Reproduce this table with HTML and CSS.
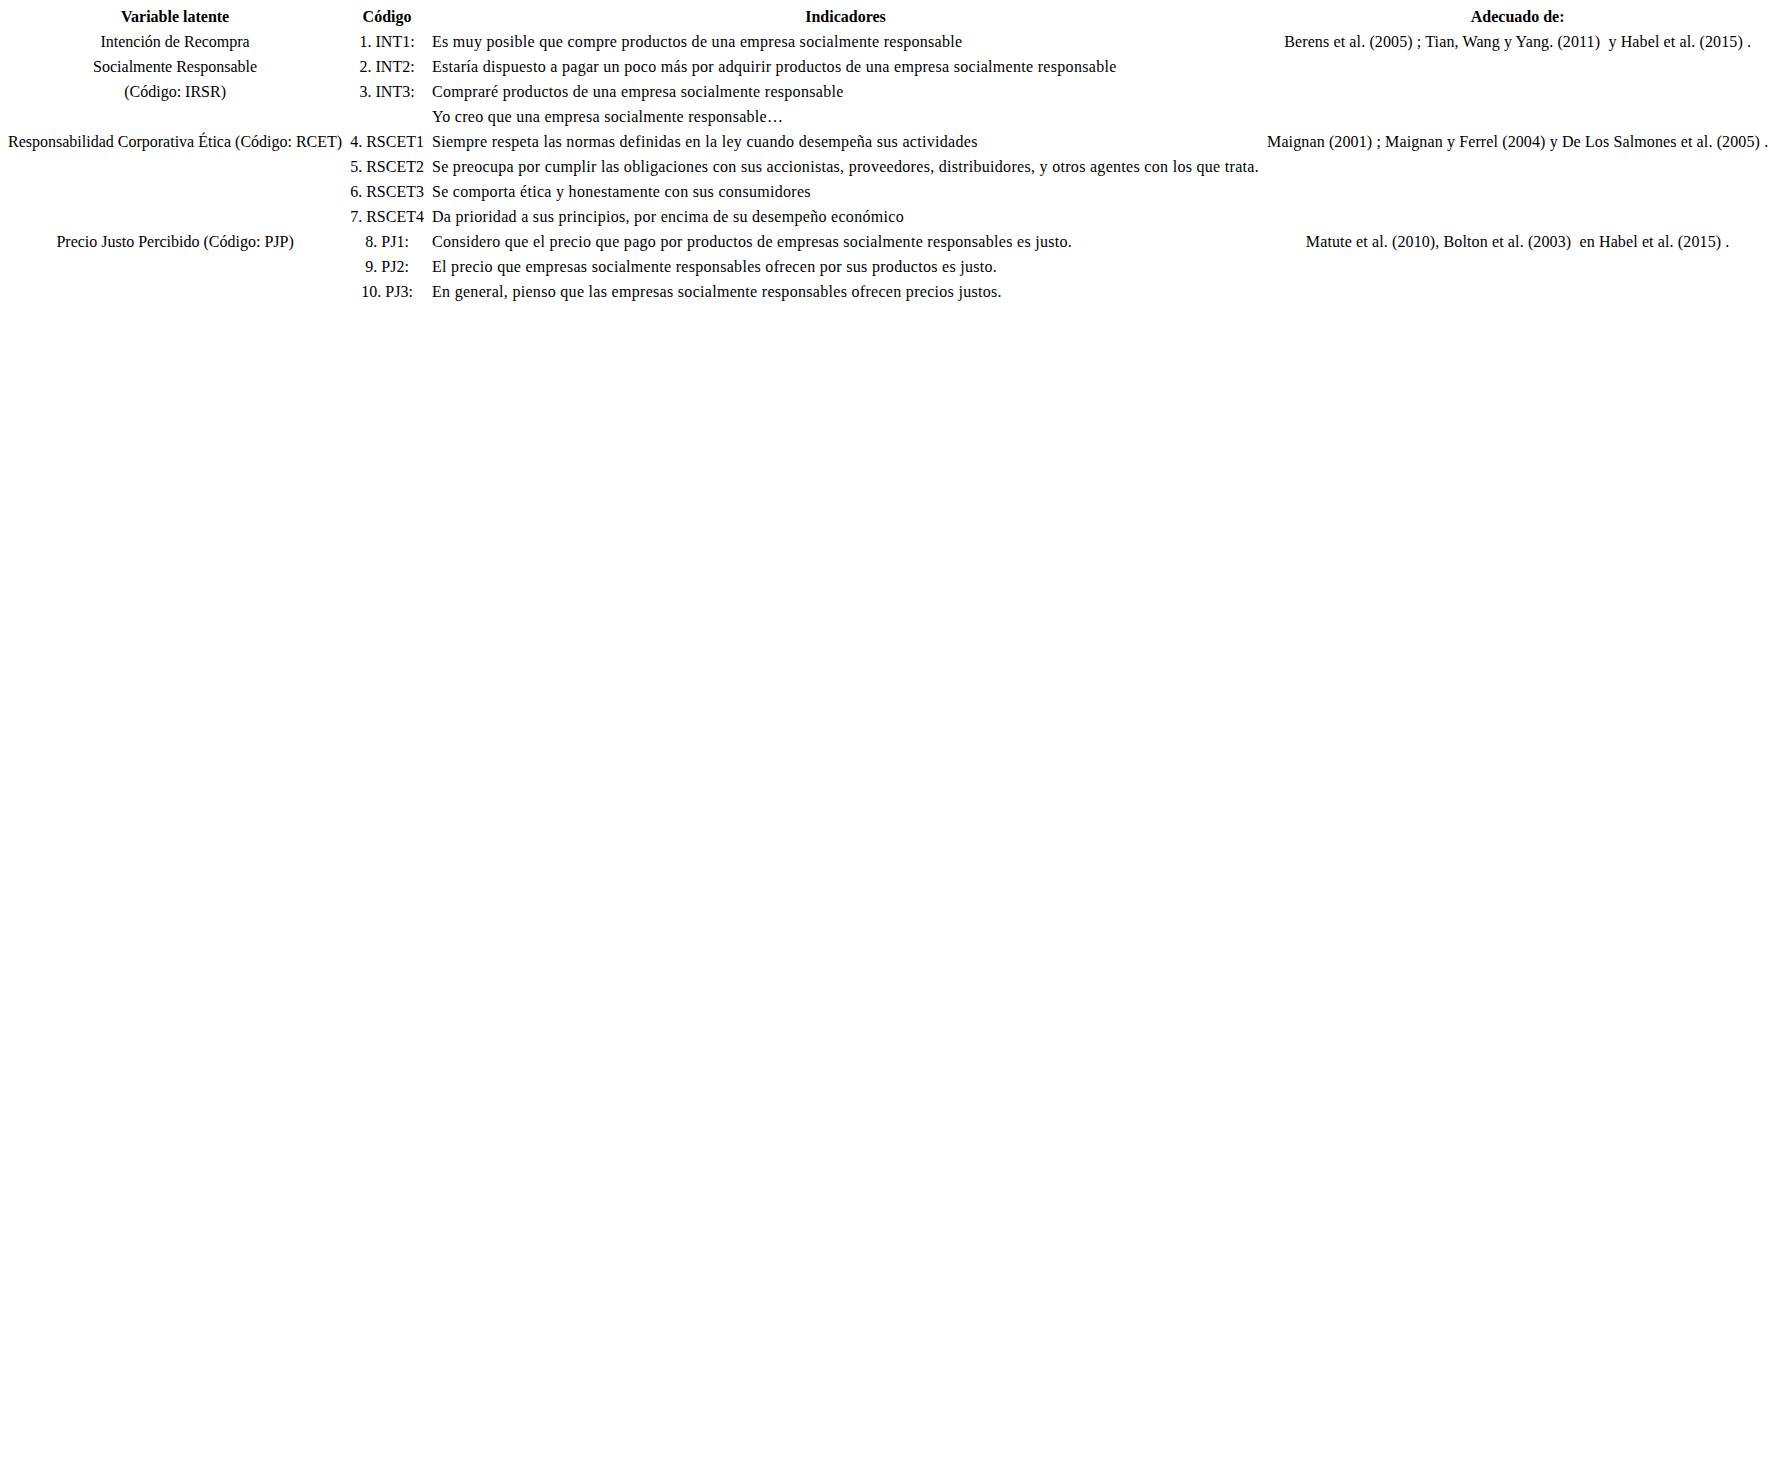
FILE: index.html
```html
<!DOCTYPE html>
<html lang="es">
<head>
<meta charset="utf-8">
<title>Variables latentes</title>
<link rel="stylesheet" href="styles.css">
</head>
<body>
<table class="scale">
  <thead>
    <tr>
      <th class="c-var">Variable latente</th>
      <th class="c-code">Código</th>
      <th class="c-ind">Indicadores</th>
      <th class="c-src">Adecuado de:</th>
    </tr>
  </thead>
  <tbody>
    <tr>
      <td class="c-var">Intención de Recompra</td>
      <td class="c-code">1. INT1:</td>
      <td class="c-ind">Es muy posible que compre productos de una empresa socialmente responsable</td>
      <td class="c-src">Berens et al. (2005) ; Tian, Wang y Yang. (2011) &nbsp;y Habel et al. (2015) .</td>
    </tr>
    <tr>
      <td class="c-var">Socialmente Responsable</td>
      <td class="c-code">2. INT2:</td>
      <td class="c-ind">Estaría dispuesto a pagar un poco más por adquirir productos de una empresa socialmente responsable</td>
      <td class="c-src"></td>
    </tr>
    <tr>
      <td class="c-var">(Código: IRSR)</td>
      <td class="c-code">3. INT3:</td>
      <td class="c-ind">Compraré productos de una empresa socialmente responsable</td>
      <td class="c-src"></td>
    </tr>
    <tr>
      <td class="c-var"></td>
      <td class="c-code"></td>
      <td class="c-ind">Yo creo que una empresa socialmente responsable…</td>
      <td class="c-src"></td>
    </tr>
    <tr>
      <td class="c-var">Responsabilidad Corporativa Ética (Código: RCET)</td>
      <td class="c-code">4. RSCET1</td>
      <td class="c-ind">Siempre respeta las normas definidas en la ley cuando desempeña sus actividades</td>
      <td class="c-src">Maignan (2001) ; Maignan y Ferrel (2004) y De Los Salmones et al. (2005) .</td>
    </tr>
    <tr>
      <td class="c-var"></td>
      <td class="c-code">5. RSCET2</td>
      <td class="c-ind">Se preocupa por cumplir las obligaciones con sus accionistas, proveedores, distribuidores, y otros agentes con los que trata.</td>
      <td class="c-src"></td>
    </tr>
    <tr>
      <td class="c-var"></td>
      <td class="c-code">6. RSCET3</td>
      <td class="c-ind">Se comporta ética y honestamente con sus consumidores</td>
      <td class="c-src"></td>
    </tr>
    <tr>
      <td class="c-var"></td>
      <td class="c-code">7. RSCET4</td>
      <td class="c-ind">Da prioridad a sus principios, por encima de su desempeño económico</td>
      <td class="c-src"></td>
    </tr>
    <tr>
      <td class="c-var">Precio Justo Percibido (Código: PJP)</td>
      <td class="c-code">8. PJ1:</td>
      <td class="c-ind">Considero que el precio que pago por productos de empresas socialmente responsables es justo.</td>
      <td class="c-src">Matute et al. (2010), Bolton et al. (2003) &nbsp;en Habel et al. (2015) .</td>
    </tr>
    <tr>
      <td class="c-var"></td>
      <td class="c-code">9. PJ2:</td>
      <td class="c-ind">El precio que empresas socialmente responsables ofrecen por sus productos es justo.</td>
      <td class="c-src"></td>
    </tr>
    <tr>
      <td class="c-var"></td>
      <td class="c-code">10. PJ3:</td>
      <td class="c-ind">En general, pienso que las empresas socialmente responsables ofrecen precios justos.</td>
      <td class="c-src"></td>
    </tr>
  </tbody>
</table>
</body>
</html>
```

FILE: styles.css
```css
html, body {
  margin: 0;
  padding: 0;
  background: #ffffff;
  overflow: hidden;
}

body {
  padding: 4px 0 0 4px;
  font-family: "Liberation Serif", "Times New Roman", serif;
  font-size: 16px;
  color: #000000;
}

.scale {
  border-collapse: collapse;
  border-spacing: 0;
  width: max-content;
}

.scale th,
.scale td {
  padding: 0 4px;
  height: 25px;
  line-height: 25px;
  white-space: nowrap;
  text-align: center;
  vertical-align: middle;
}

.scale th {
  font-weight: bold;
  letter-spacing: 0;
}

.scale td.c-ind {
  text-align: left;
  letter-spacing: 0.3px;
}

.scale td.c-src {
  letter-spacing: 0.12px;
}
```
